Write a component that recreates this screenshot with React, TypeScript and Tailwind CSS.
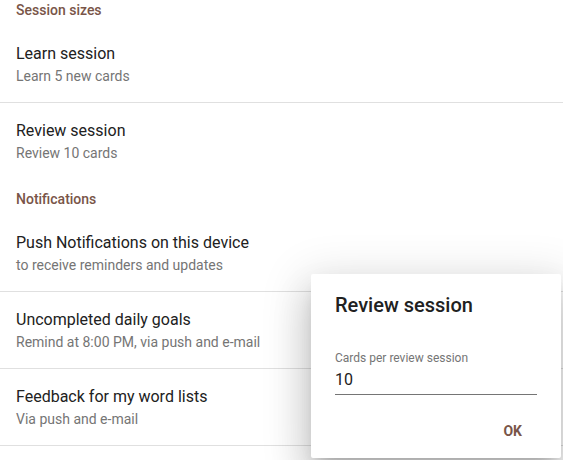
import React from "react";

const items = {
  session: [
    { title: "Learn session", sub: "Learn 5 new cards", divider: true },
    { title: "Review session", sub: "Review 10 cards", divider: false },
  ],
  notifications: [
    { title: "Push Notifications on this device", sub: "to receive reminders and updates", divider: true },
    { title: "Uncompleted daily goals", sub: "Remind at 8:00 PM, via push and e-mail", divider: true },
    { title: "Feedback for my word lists", sub: "Via push and e-mail", divider: true },
  ],
};

function Row({ title, sub, divider }: { title: string; sub: string; divider: boolean }) {
  return (
    <div className={`px-4 py-4 ${divider ? "border-b border-[#e0e0e0]" : ""}`}>
      <div className="text-base leading-6 text-[#212121]">{title}</div>
      <div className="text-sm leading-5 text-[#757575]">{sub}</div>
    </div>
  );
}

export default function App() {
  return (
    <div className="relative w-[563px] h-[460px] overflow-hidden bg-white font-['Roboto',sans-serif]">
      {/* settings list */}
      <div className="px-4 pb-[6px] text-sm leading-5 font-medium text-[#795548]">Session sizes</div>
      {items.session.map((it) => (
        <Row key={it.title} {...it} />
      ))}
      <div className="px-4 pt-[10px] pb-[6px] text-sm leading-5 font-medium text-[#795548]">Notifications</div>
      {items.notifications.map((it) => (
        <Row key={it.title} {...it} />
      ))}

      {/* dialog */}
      <div className="absolute left-[311px] top-[274px] w-[250px] h-[184px] bg-white rounded-[2px] shadow-[0_11px_15px_-7px_rgba(0,0,0,0.2),0_24px_38px_3px_rgba(0,0,0,0.14),0_9px_46px_8px_rgba(0,0,0,0.12)] flex flex-col">
        <div className="px-6 pt-[17px] text-xl leading-7 font-medium text-[#212121]">Review session</div>
        <div className="px-6 pt-[31px]">
          <div className="text-xs leading-4 text-[#757575]">Cards per review session</div>
          <div className="mt-[2px] text-base leading-6 text-[#212121] border-b border-[#757575] pb-[2px]">10</div>
        </div>
        <div className="flex justify-end pr-[39px] pt-[26px]">
          <span className="text-sm leading-5 font-bold text-[#795548]">OK</span>
        </div>
      </div>
    </div>
  );
}
